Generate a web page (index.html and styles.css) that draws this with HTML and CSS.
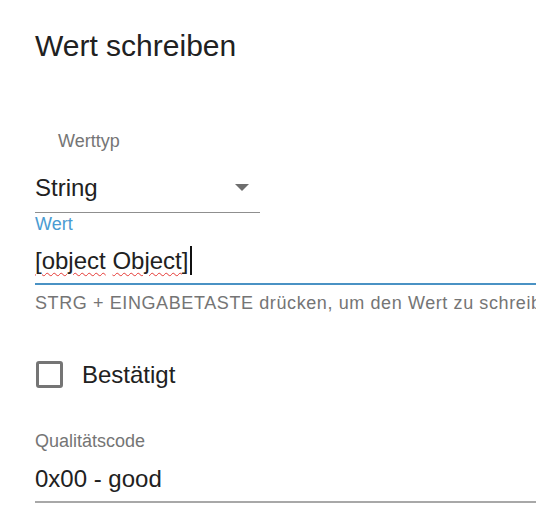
FILE: index.html
```html
<!DOCTYPE html>
<html lang="de">
<head>
  <meta charset="UTF-8" />
  <meta name="viewport" content="width=device-width, initial-scale=1.0" />
  <title>Wert schreiben</title>
  <link rel="stylesheet" href="styles.css">
</head>
<body>
  <div class="dialog">
    <h2 class="dialog-title">Wert schreiben</h2>

    <div class="select-field">
      <label class="select-label">Werttyp</label>
      <div class="select-box">
        <span class="select-value">String</span>
        <span class="select-arrow"></span>
      </div>
    </div>

    <div class="text-field">
      <label class="field-label focused">Wert</label>
      <div class="input-box focused">
        <span class="input-value"><span class="misspelled">[object</span> <span class="misspelled">Object</span>]</span><span class="caret"></span>
      </div>
      <p class="helper-text">STRG + EINGABETASTE drücken, um den Wert zu schreiben</p>
    </div>

    <label class="checkbox-row">
      <span class="checkbox"></span>
      <span class="checkbox-label">Bestätigt</span>
    </label>

    <div class="text-field quality">
      <label class="field-label">Qualitätscode</label>
      <div class="input-box">
        <span class="input-value">0x00 - good</span>
      </div>
    </div>
  </div>
</body>
</html>
```

FILE: styles.css
```css
* {
  box-sizing: border-box;
  margin: 0;
  padding: 0;
}

html, body {
  background: #ffffff;
  overflow: hidden;
}

body {
  font-family: 'Liberation Sans', Arial, sans-serif;
  color: #212121;
}

.dialog {
  padding: 27.6px 0 0 35px;
  width: 536px;
}

.dialog-title {
  font-size: 30px;
  line-height: 36px;
  font-weight: 400;
  color: #212121;
}

/* select */
.select-field {
  margin-top: 66.2px;
  width: 225px;
}

.select-label {
  display: block;
  padding-left: 23px;
  font-size: 18px;
  line-height: 22px;
  color: #757575;
}

.select-box {
  margin-top: 20.9px;
  display: flex;
  align-items: center;
  justify-content: space-between;
  padding-bottom: 9.3px;
  border-bottom: 1px solid #8f8f8f;
}

.select-value {
  font-size: 24px;
  line-height: 30px;
}

.select-arrow {
  width: 0;
  height: 0;
  margin-right: 11px;
  border-left: 7px solid transparent;
  border-right: 7px solid transparent;
  border-top: 7px solid #6e6e6e;
}

/* text fields */
.field-label {
  display: block;
  font-size: 18px;
  line-height: 22px;
  color: #757575;
}

.field-label.focused {
  color: #4a9bd2;
}

.input-box {
  margin-top: 10.7px;
  display: flex;
  align-items: center;
  padding-bottom: 7.3px;
  border-bottom: 2px solid #a8a8a8;
}

.input-box.focused {
  border-bottom-color: #4a92c4;
}

.input-value {
  font-size: 24px;
  line-height: 30px;
  white-space: nowrap;
}

.misspelled {
  text-decoration: underline wavy #e53935;
  text-decoration-thickness: 1px;
  text-underline-offset: 3px;
}

.caret {
  display: inline-block;
  width: 2px;
  height: 29px;
  margin-left: 2px;
  background: #111111;
}

.helper-text {
  margin-top: 6.8px;
  font-size: 18px;
  line-height: 22px;
  color: #757575;
  letter-spacing: 0.6px;
  white-space: nowrap;
}

/* checkbox */
.checkbox-row {
  margin-top: 45.9px;
  display: flex;
  align-items: center;
  gap: 19px;
  padding-left: 1px;
}

.checkbox {
  width: 27px;
  height: 27px;
  border: 3px solid #757575;
  border-radius: 3px;
}

.checkbox-label {
  font-size: 24px;
  line-height: 30px;
}

.quality {
  margin-top: 40.1px;
}

.quality .input-box {
  margin-top: 11.9px;
}
```
